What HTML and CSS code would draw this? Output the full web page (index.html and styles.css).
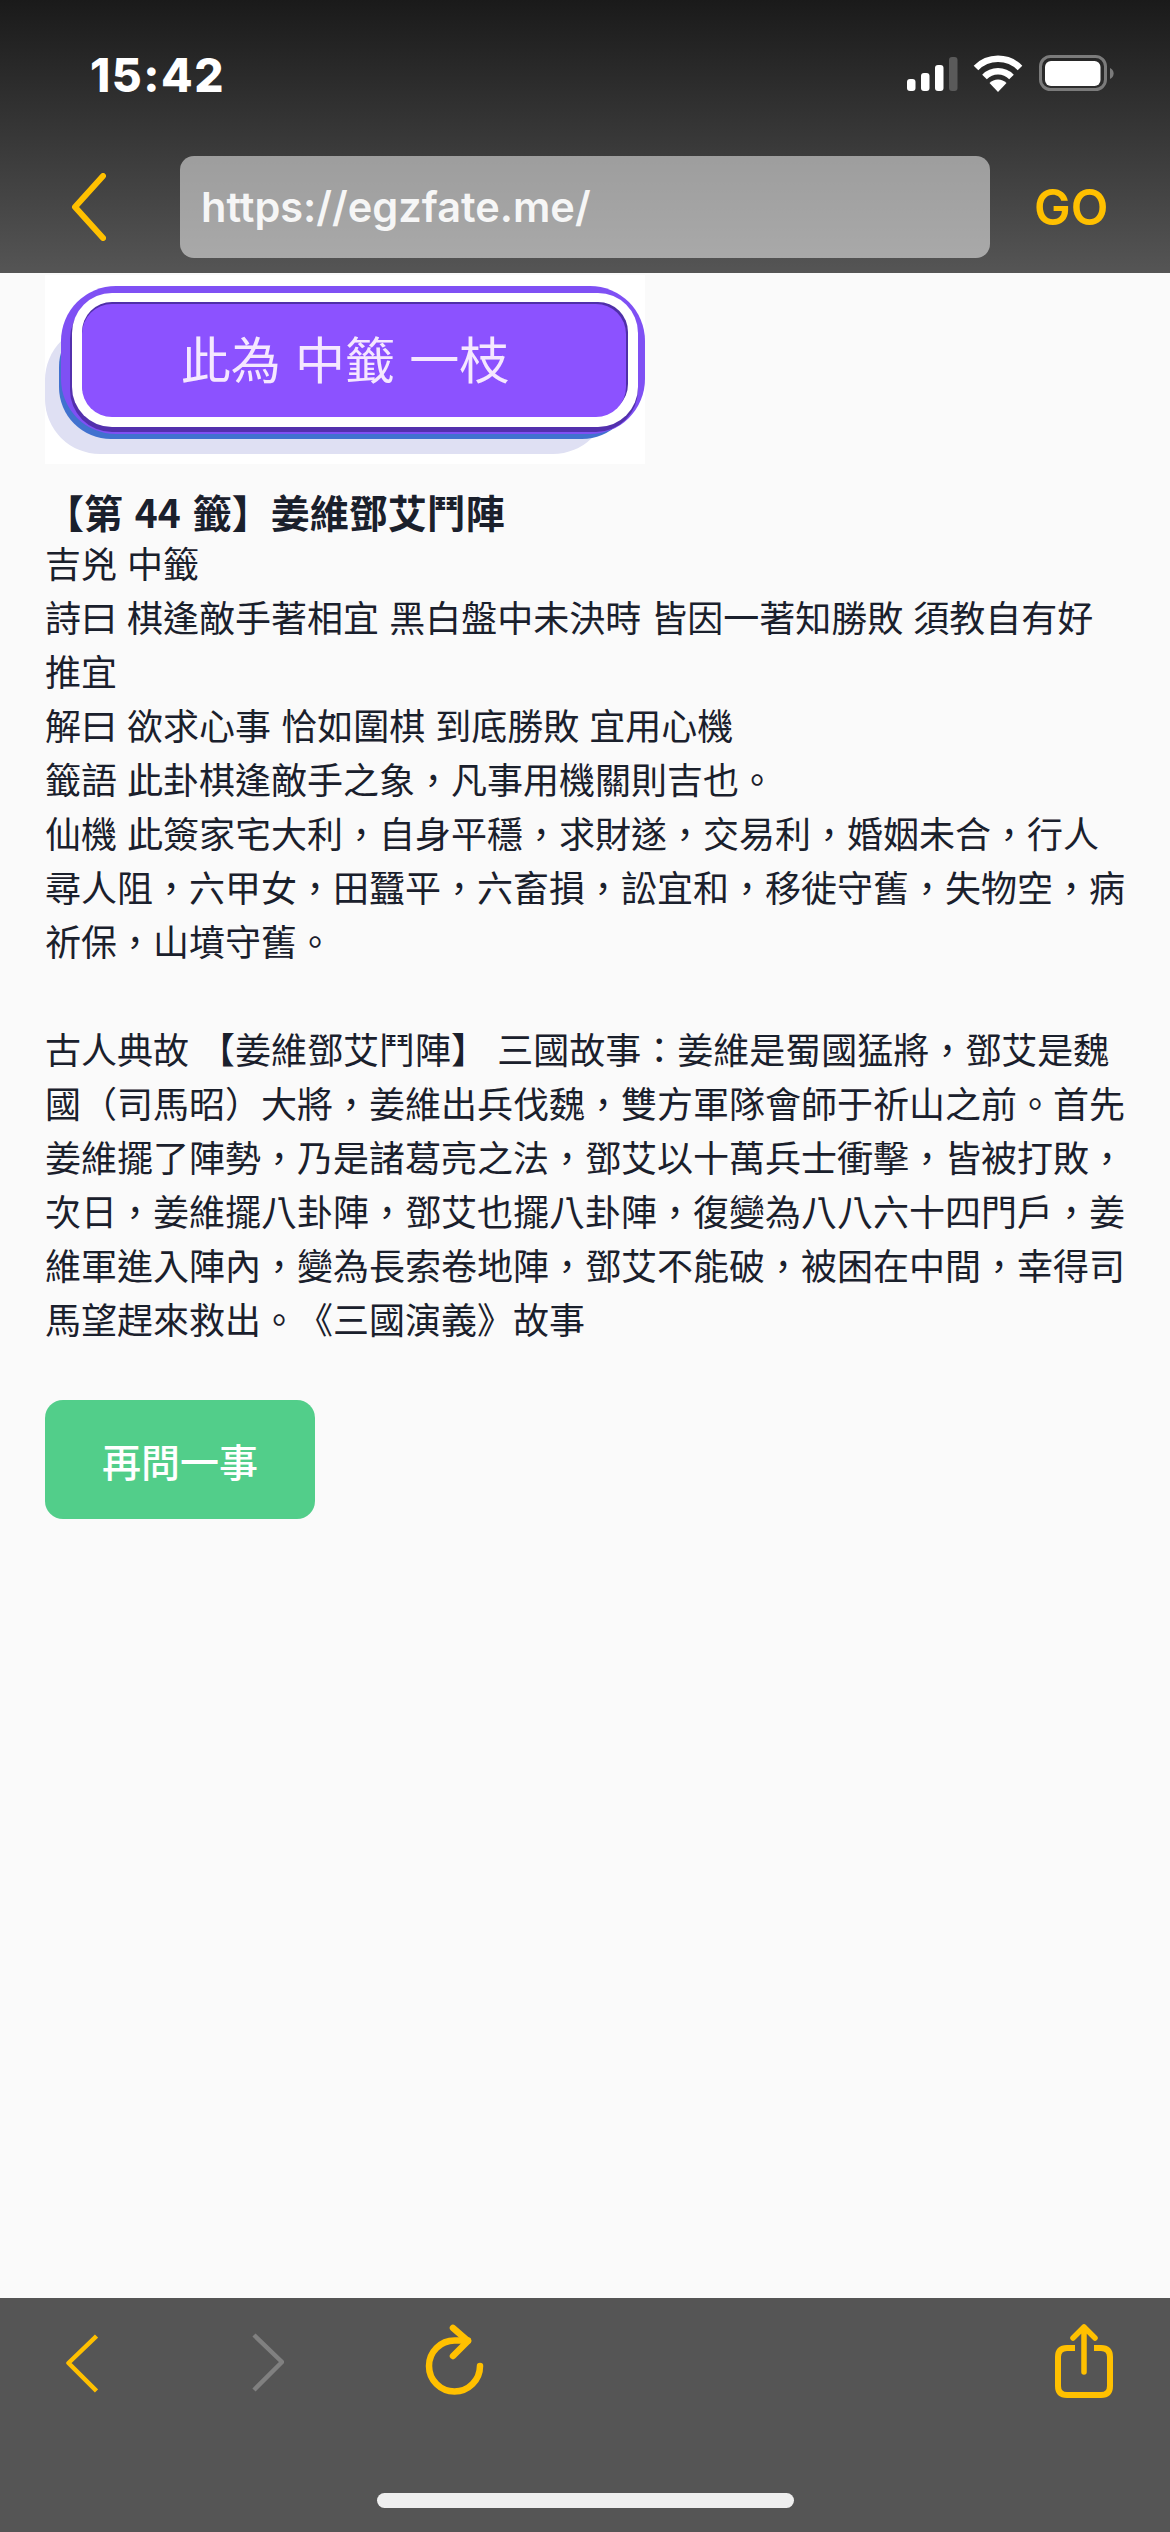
FILE: index.html
```html
<!DOCTYPE html>
<html lang="zh-Hant">
<head>
    <meta charset="UTF-8">
    <meta name="viewport" content="width=device-width, initial-scale=1.0">
    <title>egzfate</title>
    <link rel="stylesheet" href="styles.css">
</head>
<body>

<header class="toolbar">
    <div class="status-bar">
        <span class="clock">15:42</span>
        <div class="status-icons">
            <svg class="signal" width="70" height="34" viewBox="0 0 70 34">
                <rect x="0" y="22" width="8.5" height="12" rx="3" fill="#fff"/>
                <rect x="14" y="16" width="8.5" height="18" rx="3" fill="#fff"/>
                <rect x="28" y="8" width="8.5" height="26" rx="3" fill="#fff"/>
                <rect x="42" y="0" width="8.5" height="34" rx="3" fill="#5a5a5a"/>
            </svg>
            <svg class="wifi" width="50" height="37" viewBox="0 0 50 37">
                <path d="M3 13 A31 31 0 0 1 47 13" fill="none" stroke="#fff" stroke-width="6.5"/>
                <path d="M11.5 22 A19 19 0 0 1 38.5 22" fill="none" stroke="#fff" stroke-width="6.5"/>
                <path d="M25 37 L16.5 28 A12 12 0 0 1 33.5 28 Z" fill="#fff"/>
            </svg>
            <svg class="battery" width="77" height="37" viewBox="0 0 77 37">
                <rect x="1.5" y="1.5" width="65" height="33" rx="10" fill="none" stroke="#7b7b7b" stroke-width="3"/>
                <rect x="6" y="6" width="55.5" height="25" rx="6" fill="#fff"/>
                <path d="M71 13 a6 6 0 0 1 0 11 Z" fill="#7b7b7b"/>
            </svg>
        </div>
    </div>
    <div class="nav-row">
        <svg class="nav-back" width="35" height="68" viewBox="0 0 35 68">
            <path d="M32 3 L4 34 L32 65" fill="none" stroke="#ffc000" stroke-width="6" stroke-linecap="round" stroke-linejoin="round"/>
        </svg>
        <div class="url-field">https://egzfate.me/</div>
        <span class="go">GO</span>
    </div>
</header>

<main class="page">
    <!-- result picture -->
    <svg class="stick-banner" width="600" height="189" viewBox="0 0 600 189">
        <rect width="600" height="189" fill="#fff"/>
        <rect x="0" y="50" width="563" height="129" rx="55" fill="#dfe0f3"/>
        <rect x="14" y="40" width="575" height="124" rx="52" fill="#4172cf"/>
        <rect x="16" y="11" width="584" height="148" rx="55" fill="#7f50f4"/>
        <rect x="25" y="22" width="568" height="135" rx="42" fill="#5330ad"/>
        <rect x="27" y="18" width="566" height="134" rx="40" fill="#fff"/>
        <rect x="37" y="27" width="546" height="112" rx="30" fill="#4f2fa8"/>
        <rect x="37" y="29" width="544" height="113" rx="30" fill="#8c52ff"/>
        <text class="banner-text" x="300" y="104" text-anchor="middle">此為 中籤 一枝</text>
    </svg>

    <article class="fortune">
        <h2>【第 44 籤】姜維鄧艾鬥陣</h2>
        <p>吉兇 中籤</p>
        <p>詩曰 棋逢敵手著相宜 黑白盤中未決時 皆因一著知勝敗 須教自有好推宜</p>
        <p>解曰 欲求心事 恰如圍棋 到底勝敗 宜用心機</p>
        <p>籤語 此卦棋逢敵手之象&#65292;凡事用機關則吉也。</p>
        <p class="gap-after">仙機 此簽家宅大利&#65292;自身平穩&#65292;求財遂&#65292;交易利&#65292;婚姻未合&#65292;行人尋人阻&#65292;六甲女&#65292;田蠶平&#65292;六畜損&#65292;訟宜和&#65292;移徙守舊&#65292;失物空&#65292;病祈保&#65292;山墳守舊。</p>
        <p>古人典故 【姜維鄧艾鬥陣】 三國故事&#65306;姜維是蜀國猛將&#65292;鄧艾是魏國&#65288;司馬昭&#65289;大將&#65292;姜維出兵伐魏&#65292;雙方軍隊會師于祈山之前。首先姜維擺了陣勢&#65292;乃是諸葛亮之法&#65292;鄧艾以十萬兵士衝擊&#65292;皆被打敗&#65292;次日&#65292;姜維擺八卦陣&#65292;鄧艾也擺八卦陣&#65292;復變為八八六十四門戶&#65292;姜維軍進入陣內&#65292;變為長索卷地陣&#65292;鄧艾不能破&#65292;被困在中間&#65292;幸得司馬望趕來救出。《三國演義》故事</p>
    </article>

    <button class="ask-again">再問一事</button>
</main>

<footer class="bottom-bar">
    <div class="bottom-icons">
        <svg width="32" height="60" viewBox="0 0 32 60">
            <path d="M30.5 3 L2.5 30 L30.5 58" fill="none" stroke="#ffc000" stroke-width="4.5" stroke-linejoin="round"/>
        </svg>
        <svg class="forward" width="32" height="60" viewBox="0 0 32 60">
            <path d="M2 2 L30 29 L2 57" fill="none" stroke="#808080" stroke-width="4.5" stroke-linejoin="round"/>
        </svg>
        <svg class="reload" width="60" height="74" viewBox="0 0 60 74">
            <path d="M55 42 A25.5 25.5 0 1 1 29.5 16.5 H43" fill="none" stroke="#ffc000" stroke-width="6.5" stroke-linecap="round"/>
            <path d="M28 4 L43 17 L28 32" fill="none" stroke="#ffc000" stroke-width="6.5" stroke-linecap="round" stroke-linejoin="round"/>
        </svg>
        <svg class="share" width="60" height="76" viewBox="0 0 60 76">
            <path d="M21 24 H13 Q4 24 4 33 V62 Q4 71 13 71 H47 Q56 71 56 62 V33 Q56 24 47 24 H40" fill="none" stroke="#ffc000" stroke-width="6"/>
            <path d="M30 3 V48 M19 14 L30 3 L41 14" fill="none" stroke="#ffc000" stroke-width="5.5" stroke-linecap="round" stroke-linejoin="round"/>
        </svg>
    </div>
    <div class="home-indicator"></div>
</footer>

</body>
</html>
```

FILE: styles.css
```css
* {
    box-sizing: border-box;
}
body {
    margin: 0;
    height: 100vh;
    display: flex;
    flex-direction: column;
    background-color: #fafafa;
    color: #1a202c;
    font-family: "Noto Sans CJK TC", "Noto Sans", sans-serif;
}
.toolbar {
    height: 273px;
    flex-shrink: 0;
    background: linear-gradient(#1a1a1a, #555555);
}
.status-bar {
    height: 156px;
    padding: 55px 54px 0 90px;
    display: flex;
    justify-content: space-between;
    align-items: flex-start;
}
.clock {
    color: #fff;
    font-family: Inter, "Liberation Sans", sans-serif;
    font-size: 46px;
    font-weight: 800;
    line-height: 40px;
    letter-spacing: 1.5px;
}
.status-icons {
    display: flex;
    align-items: flex-end;
}
.signal {
    margin-right: -4px;
    margin-bottom: 1px;
}
.wifi {
    margin-right: 16px;
}
.nav-row {
    display: flex;
    align-items: center;
    height: 102px;
    padding-left: 71px;
}
.url-field {
    width: 810px;
    height: 102px;
    margin-left: 74px;
    padding-left: 21px;
    border-radius: 14px;
    background: rgba(255, 255, 255, 0.5);
    color: #f6f6f6;
    font-family: Inter, "Liberation Sans", sans-serif;
    font-size: 41.5px;
    font-weight: 600;
    line-height: 102px;
}
.go {
    margin-left: 44px;
    color: #ffc000;
    font-family: Inter, "Liberation Sans", sans-serif;
    font-size: 49px;
    font-weight: 600;
}
.page {
    flex: 1;
    padding: 2px 45px 0;
}
.stick-banner {
    display: block;
}
.banner-text {
    fill: #f5e8ff;
    font-family: "Noto Sans CJK TC", sans-serif;
    font-size: 50px;
    word-spacing: 3px;
}
.fortune {
    margin-top: 23px;
    font-size: 36px;
    line-height: 54px;
    word-spacing: 2px;
    text-spacing-trim: space-all;
}
.fortune h2 {
    margin: 0;
    font-size: 39px;
    font-weight: 700;
    line-height: 48px;
    word-spacing: 3px;
}
.fortune p {
    margin: 0;
}
.fortune .gap-after {
    margin-bottom: 54px;
}
.ask-again {
    display: block;
    width: 270px;
    height: 119px;
    margin-top: 55px;
    border: none;
    border-radius: 18px;
    background-color: #52ce8a;
    color: #fff;
    font-family: "Noto Sans CJK TC", sans-serif;
    font-size: 39px;
    font-weight: 500;
}
.bottom-bar {
    height: 234px;
    flex-shrink: 0;
    background-color: #555555;
}
.bottom-icons {
    display: flex;
    align-items: flex-start;
    height: 195px;
    padding: 26px 0 0 66px;
}
.bottom-icons svg {
    margin-top: 9px;
}
.bottom-icons .forward {
    margin-left: 154px;
}
.bottom-icons .reload {
    margin-left: 141px;
    margin-top: 0;
}
.bottom-icons .share {
    margin-left: auto;
    margin-right: 56px;
    margin-top: 0;
}
.home-indicator {
    width: 417px;
    height: 15px;
    margin: 0 auto;
    border-radius: 8px;
    background-color: #efefef;
}
```
